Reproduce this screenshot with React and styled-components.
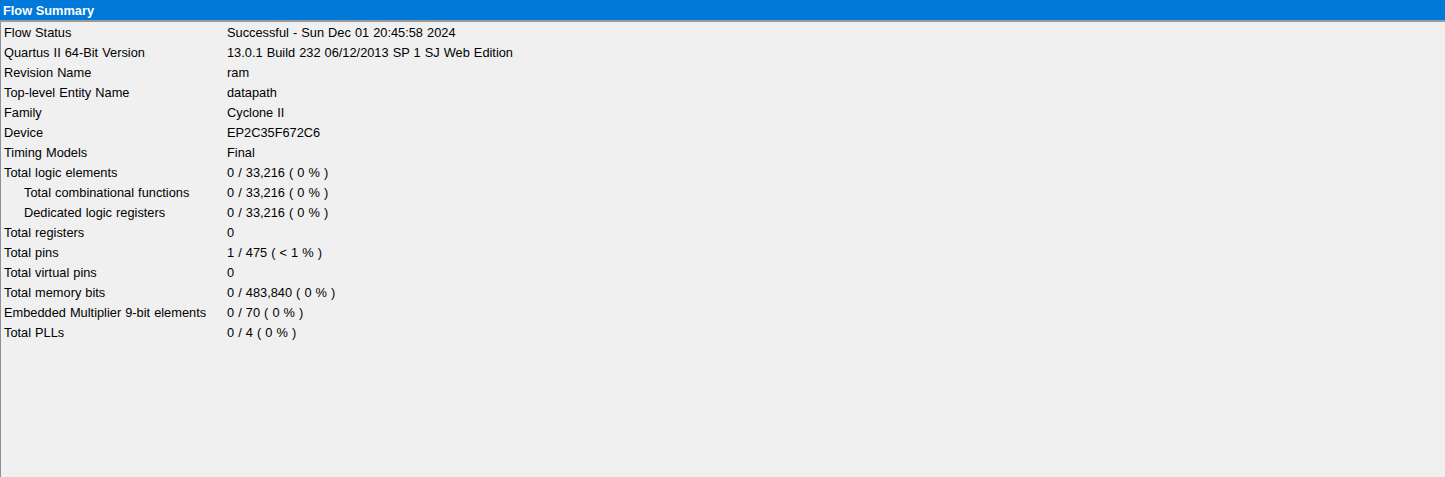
import styled, { createGlobalStyle } from "styled-components"

const Global = createGlobalStyle`
  html, body { margin: 0; padding: 0; background: #f0f0f0; }
  body { font-family: Tahoma, "Liberation Sans", Arial, sans-serif; }
`

const Panel = styled.div`
  width: 1445px;
  height: 477px;
  display: flex;
  flex-direction: column;
  background: #f0f0f0;
  overflow: hidden;
`
const Header = styled.div`
  height: 20px;
  background: #0078d7;
  color: white;
  font-weight: bold;
  font-size: 12.8px;
  line-height: 21px;
  padding-left: 3px;
  border-bottom: 2px solid #9a9a9a;
`
const Body = styled.div`
  flex: 1;
  border-left: 1px solid #8e909a;
  padding-top: 0;
`
const Row = styled.div`
  display: grid;
  grid-template-columns: 226px 1fr;
  height: 20px;
  align-items: center;
  font-size: 12.8px;
  word-spacing: 0.5px;
  color: #000;
`
const Label = styled.div`
  padding-left: ${props => props.indent ? 23 : 3}px;
`
const Value = styled.div``

const rows = [
  ["Flow Status", "Successful - Sun Dec 01 20:45:58 2024"],
  ["Quartus II 64-Bit Version", "13.0.1 Build 232 06/12/2013 SP 1 SJ Web Edition"],
  ["Revision Name", "ram"],
  ["Top-level Entity Name", "datapath"],
  ["Family", "Cyclone II"],
  ["Device", "EP2C35F672C6"],
  ["Timing Models", "Final"],
  ["Total logic elements", "0 / 33,216 ( 0 % )"],
  ["Total combinational functions", "0 / 33,216 ( 0 % )", true],
  ["Dedicated logic registers", "0 / 33,216 ( 0 % )", true],
  ["Total registers", "0"],
  ["Total pins", "1 / 475 ( < 1 % )"],
  ["Total virtual pins", "0"],
  ["Total memory bits", "0 / 483,840 ( 0 % )"],
  ["Embedded Multiplier 9-bit elements", "0 / 70 ( 0 % )"],
  ["Total PLLs", "0 / 4 ( 0 % )"],
]

function App() {
  return (
    <>
      <Global />
      <Panel>
        <Header>Flow Summary</Header>
        <Body>
          {rows.map(([k, v, indent]) => (
            <Row key={k}>
              <Label indent={indent}>{k}</Label>
              <Value>{v}</Value>
            </Row>
          ))}
        </Body>
      </Panel>
    </>
  )
}

export default App
